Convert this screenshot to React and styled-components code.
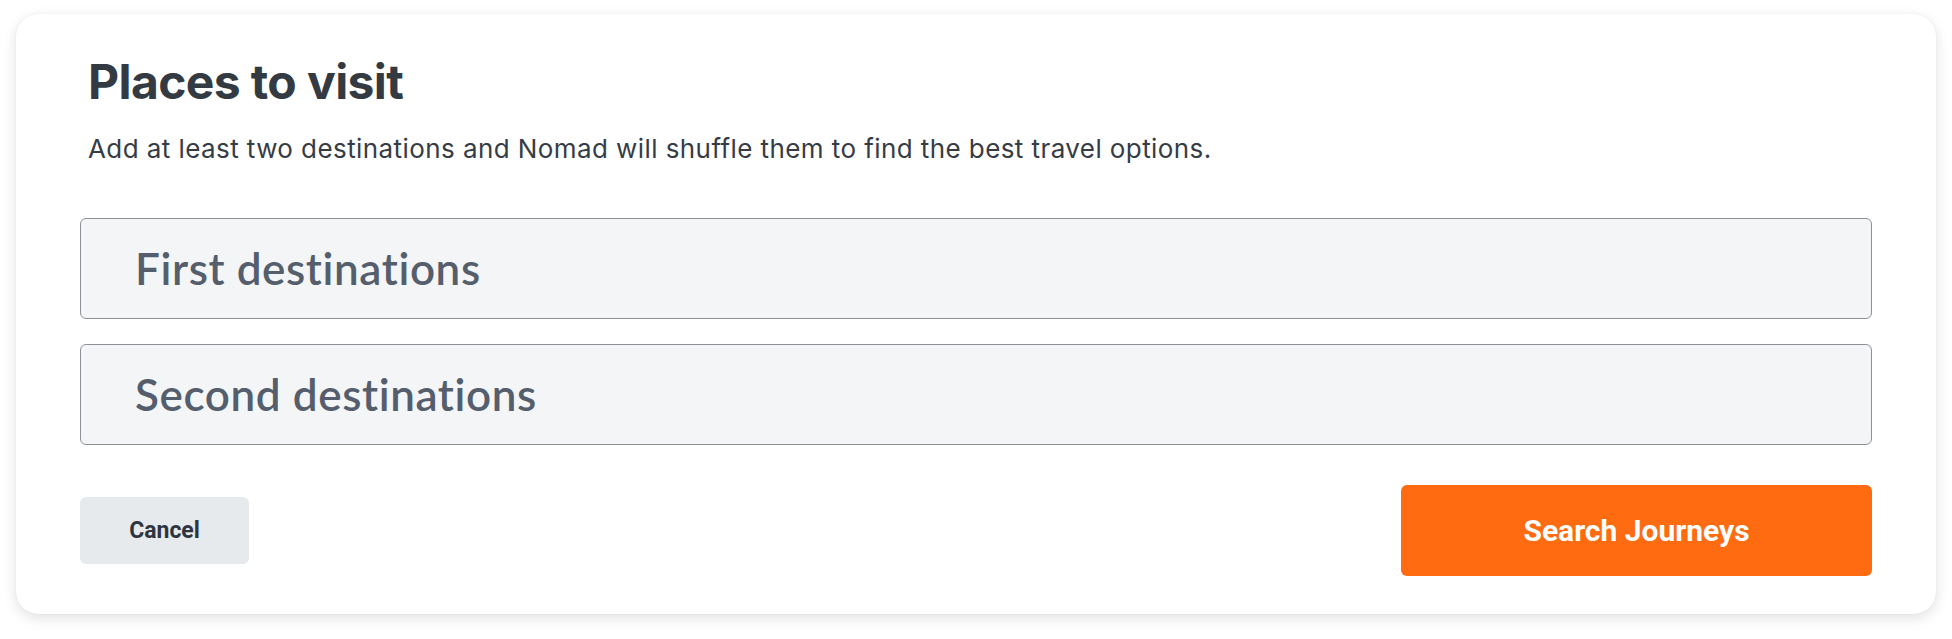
import React, { useState } from 'react';
import styled, { createGlobalStyle } from 'styled-components';

const GlobalStyle = createGlobalStyle`
  html, body {
    margin: 0;
    padding: 0;
    background: #ffffff;
  }
  * {
    box-sizing: border-box;
  }
`;

const Page = styled.div`
  padding: 14px 16px 24px;
`;

const Card = styled.section`
  display: flex;
  flex-direction: column;
  background: #ffffff;
  border-radius: 22px;
  box-shadow: 0 0 1px rgba(0, 0, 0, 0.12), 0 4px 14px rgba(0, 0, 0, 0.12);
  padding: 39px 64px 38px;
`;

const Header = styled.header`
  padding-left: 8px;
  margin-bottom: 54px;
`;

const Title = styled.h1`
  margin: 0 0 22px;
  font-family: Inter, "Liberation Sans", sans-serif;
  font-weight: 700;
  font-size: 48px;
  letter-spacing: -0.6px;
  line-height: 1.2;
  color: #343a42;
`;

const Subtitle = styled.p`
  margin: 0;
  font-family: Inter, "Liberation Sans", sans-serif;
  font-weight: 400;
  font-size: 26px;
  letter-spacing: 0.42px;
  line-height: 1.2;
  color: #363c46;
`;

const Fields = styled.div`
  display: flex;
  flex-direction: column;
  gap: 25px;
  margin-bottom: 40px;
`;

const DestinationInput = styled.input`
  width: 100%;
  height: 101px;
  padding: 0 54px;
  border: 1px solid #8e9298;
  border-radius: 6px;
  background: #f4f5f7;
  font-family: Lato, "Liberation Sans", sans-serif;
  font-weight: 600;
  font-size: 44px;
  letter-spacing: 0.6px;
  color: #3a424e;
  outline: none;

  &::placeholder {
    color: #545e6c;
    opacity: 1;
  }
`;

const Actions = styled.div`
  display: flex;
  align-items: center;
  justify-content: space-between;
`;

const Button = styled.button`
  display: flex;
  align-items: center;
  justify-content: center;
  border: none;
  border-radius: 6px;
  font-family: Roboto, "Liberation Sans", sans-serif;
  font-weight: 700;
  cursor: pointer;
  width: ${(p) => (p.$primary ? '471px' : '169px')};
  height: ${(p) => (p.$primary ? '91px' : '67px')};
  font-size: ${(p) => (p.$primary ? '30px' : '23px')};
  background: ${(p) => (p.$primary ? '#ff6b10' : '#e7eaed')};
  color: ${(p) => (p.$primary ? '#ffffff' : '#2f353e')};
`;

export default function App() {
  const [first, setFirst] = useState('');
  const [second, setSecond] = useState('');

  return (
    <Page>
      <GlobalStyle />
      <Card>
        <Header>
          <Title>Places to visit</Title>
          <Subtitle>
            Add at least two destinations and Nomad will shuffle them to find the best travel options.
          </Subtitle>
        </Header>
        <Fields>
          <DestinationInput
            placeholder="First destinations"
            value={first}
            onChange={(e) => setFirst(e.target.value)}
          />
          <DestinationInput
            placeholder="Second destinations"
            value={second}
            onChange={(e) => setSecond(e.target.value)}
          />
        </Fields>
        <Actions>
          <Button type="button">Cancel</Button>
          <Button type="button" $primary>
            Search Journeys
          </Button>
        </Actions>
      </Card>
    </Page>
  );
}
